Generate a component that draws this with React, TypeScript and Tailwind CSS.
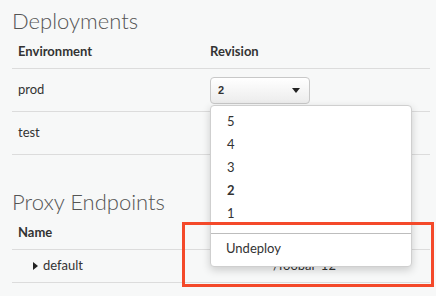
import React from "react";

const font = { fontFamily: "Lato, 'Noto Sans', sans-serif" };

export default function App() {
  const items = ["5", "4", "3", "2", "1"];
  return (
    <div
      className="relative w-[436px] h-[296px] overflow-hidden bg-[#f7f8f8] text-[#333]"
      style={font}
    >
      <div className="pl-[12px] pr-[6px]">
        <h2 className="pt-[7px] text-[22px] leading-[28px] font-light text-[#555]">
          Deployments
        </h2>
        <div className="mt-[1px]">
          <div className="flex h-[33px] items-center border-b border-[#dcdcdc] text-[13px] font-bold">
            <div className="w-[198px] pl-[6px]">Environment</div>
            <div>Revision</div>
          </div>
          <div className="flex h-[43px] items-center border-b border-[#dcdcdc] text-[13px]">
            <div className="w-[198px] pl-[6px]">prod</div>
            <div className="flex h-[27px] w-[100px] items-center justify-between rounded-[4px] border border-[#c8c8c8] bg-gradient-to-b from-white to-[#ececec] pl-[7px] pr-[9px] shadow-[inset_0_1px_0_#fff]">
              <span className="text-[11px] font-bold text-[#333]" style={{ fontFamily: "'Liberation Sans', Arial, sans-serif" }}>2</span>
              <svg width="8" height="5" viewBox="0 0 8 5">
                <path d="M0 0 L8 0 L4 5 Z" fill="#222" />
              </svg>
            </div>
          </div>
          <div className="flex h-[43px] items-center border-b border-[#dcdcdc] text-[13px]">
            <div className="w-[198px] pl-[6px]">test</div>
            <div></div>
          </div>
        </div>

        <h2 className="mt-[33px] text-[22px] leading-[28px] font-light text-[#555]">
          Proxy Endpoints
        </h2>
        <div className="mt-[1px]">
          <div className="flex h-[33px] items-center border-b border-[#dcdcdc] text-[13px] font-bold">
            <div className="w-[198px] pl-[6px]">Name</div>
            <div>Base Path</div>
          </div>
          <div className="flex h-[33px] items-center border-b border-[#dcdcdc] text-[13px]">
            <div className="flex w-[261px] items-center pl-[21px]">
              <svg width="5" height="8" viewBox="0 0 5 8" className="mr-[5px]">
                <path d="M0 0 L5 4 L0 8 Z" fill="#222" />
              </svg>
              default
            </div>
            <div>/foobar-12</div>
          </div>
        </div>
      </div>

      {/* dropdown menu */}
      <div className="absolute left-[210px] top-[105px] w-[202px] h-[162px] rounded-[4px] border border-[#cfcfcf] bg-white pt-[4px] shadow-[0_3px_8px_rgba(0,0,0,0.18)] text-[13px]">
        {items.map((it) => (
          <div
            key={it}
            className={`flex h-[23px] items-center pl-[16px] text-[#333] ${it === "2" ? "font-bold" : ""}`}
          >
            {it}
          </div>
        ))}
        <div className="mt-[8px] h-px bg-[#bdbdbd]" />
        <div className="flex h-[30px] items-center pl-[15px] text-[#333]">Undeploy</div>
      </div>

      {/* red highlight */}
      <div className="absolute left-[182px] top-[222px] w-[252px] h-[65px] border-[3px] border-[#f4492a]" />
    </div>
  );
}
